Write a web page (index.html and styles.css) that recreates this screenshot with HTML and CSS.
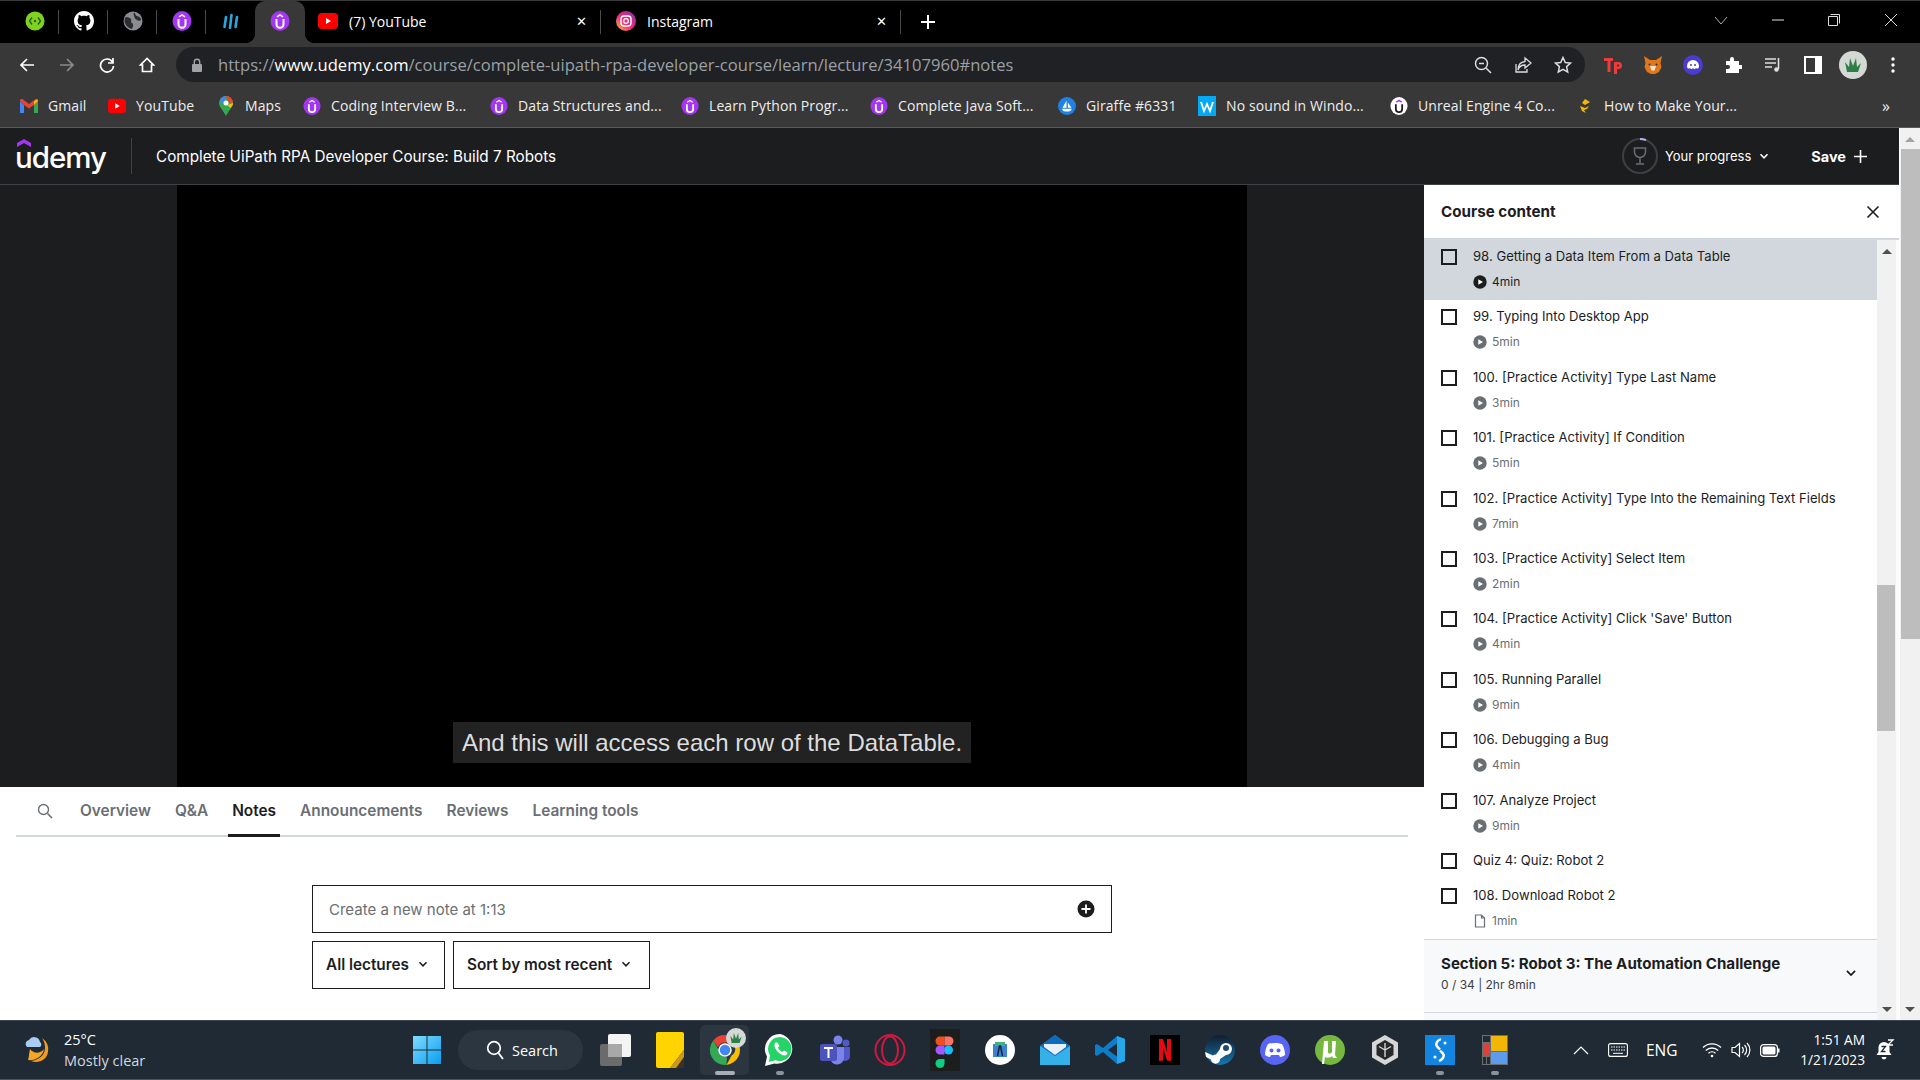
FILE: index.html
```html
<!DOCTYPE html>
<html lang="en">
<head>
    <meta charset="UTF-8">
    <title>Complete UiPath RPA Developer Course</title>
    <link rel="stylesheet" href="styles.css">
</head>
<body>
    <svg class="sprites" width="0" height="0">
        <symbol id="udemy" viewBox="0 0 20 20">
            <ellipse cx="10" cy="10" rx="9.5" ry="10" fill="#a435f0"/>
            <path d="M6.5 8v5.2a3.5 3.5 0 0 0 7 0V8" fill="none" stroke="#fff" stroke-width="2"/>
            <path d="M7 5.8 10 3.8l3 2" fill="none" stroke="#fff" stroke-width="1.4"/>
        </symbol>
        <symbol id="yt" viewBox="0 0 20 20">
            <rect x="0" y="2" width="20" height="16" rx="4" fill="#f00"/>
            <path d="M8 7v6l5-3z" fill="#fff"/>
        </symbol>
        <symbol id="play" viewBox="0 0 14 14">
            <circle cx="7" cy="7" r="6.7" fill="currentColor"/>
            <path d="M5.3 4.2v5.6L10 7z" fill="#fff"/>
        </symbol>
        <symbol id="doc" viewBox="0 0 14 14">
            <path d="M2.5 1h6l3 3v9h-9zM8.5 1v3h3" fill="none" stroke="currentColor" stroke-width="1.2"/>
        </symbol>
        <symbol id="chev" viewBox="0 0 12 12">
            <path d="M2.5 4.2 6 7.8l3.5-3.6" fill="none" stroke="currentColor" stroke-width="1.5"/>
        </symbol>
    </svg>

    <div class="tabstrip">
        <div class="pinned sep">
            <svg width="20" height="20" viewBox="0 0 20 20"><circle cx="10" cy="10" r="9.5" fill="#7ed321"/><path d="M7 6.5 4.5 10 7 13.5M13 6.5l2.5 3.5L13 13.5" fill="none" stroke="#2d5a0c" stroke-width="1.4"/><circle cx="10" cy="10" r="1.2" fill="#2d5a0c"/></svg>
        </div>
        <div class="pinned sep">
            <svg width="20" height="20" viewBox="0 0 16 16"><path fill="#fff" d="M8 0C3.58 0 0 3.58 0 8c0 3.54 2.29 6.53 5.47 7.59.4.07.55-.17.55-.38 0-.19-.01-.82-.01-1.49-2.01.37-2.53-.49-2.69-.94-.09-.23-.48-.94-.82-1.13-.28-.15-.68-.52-.01-.53.63-.01 1.08.58 1.23.82.72 1.21 1.87.87 2.33.66.07-.52.28-.87.51-1.07-1.78-.2-3.64-.89-3.64-3.95 0-.87.31-1.59.82-2.15-.08-.2-.36-1.02.08-2.12 0 0 .67-.21 2.2.82.64-.18 1.32-.27 2-.27s1.36.09 2 .27c1.53-1.04 2.2-.82 2.2-.82.44 1.1.16 1.92.08 2.12.51.56.82 1.27.82 2.15 0 3.07-1.87 3.75-3.65 3.95.29.25.54.73.54 1.48 0 1.07-.01 1.93-.01 2.2 0 .21.15.46.55.38A8.01 8.01 0 0 0 16 8c0-4.42-3.58-8-8-8z"/></svg>
        </div>
        <div class="pinned sep">
            <svg width="20" height="20" viewBox="0 0 20 20"><circle cx="10" cy="10" r="9.5" fill="#8a8d91"/><path d="M3 6c3 0 4 1 5 2s-1 3 1 4 1 4 0 6C5 17 2 14 1.5 10c0-2 .7-3 1.5-4zM11 1.5c2 1 1 3 3 3.5s3 1 4 3c0 2-2 2-3 1.5s-3-1-3.5-3-1.5-3-.5-5z" fill="#2c2d30"/></svg>
        </div>
        <div class="pinned sep"><svg width="20" height="20"><use href="#udemy"/></svg></div>
        <div class="pinned">
            <svg width="18" height="16" viewBox="0 0 18 16"><path d="M2.5 14 4 4M8 15 9.5 2M13.5 14 15 4" fill="none" stroke="#2aa7dc" stroke-width="2.6" stroke-linecap="round"/></svg>
        </div>
        <div class="pinned pinned-active"><svg width="20" height="20"><use href="#udemy"/></svg></div>
        <div class="tab tab-yt">
            <svg width="20" height="20"><use href="#yt"/></svg>
            <span class="tab-title">(7) YouTube</span>
            <span class="tab-close">✕</span>
        </div>
        <div class="tab tab-insta">
            <svg width="20" height="20" viewBox="0 0 20 20"><defs><linearGradient id="ig" x1="0" y1="1" x2="1" y2="0"><stop offset="0" stop-color="#fdc830"/><stop offset=".45" stop-color="#ee2a7b"/><stop offset="1" stop-color="#8134af"/></linearGradient></defs><circle cx="10" cy="10" r="10" fill="url(#ig)"/><rect x="5" y="5" width="10" height="10" rx="3" fill="none" stroke="#fff" stroke-width="1.4"/><circle cx="10" cy="10" r="2.3" fill="none" stroke="#fff" stroke-width="1.3"/></svg>
            <span class="tab-title">Instagram</span>
            <span class="tab-close">✕</span>
        </div>
        <svg class="new-tab" width="14" height="14" viewBox="0 0 14 14"><path d="M7 0v14M0 7h14" stroke="#fff" stroke-width="2"/></svg>
        <div class="window-controls">
            <svg width="14" height="14" viewBox="0 0 14 14"><path d="M1 4l6 7 6-7" fill="none" stroke="#aaa" stroke-width="1"/></svg>
            <svg width="14" height="14" viewBox="0 0 14 14"><path d="M1 7h12" stroke="#ddd" stroke-width="1"/></svg>
            <svg width="14" height="14" viewBox="0 0 14 14"><path d="M3.5 1.5h9v9M1.5 3.5h9v9h-9z" fill="none" stroke="#ddd" stroke-width="1"/></svg>
            <svg width="14" height="14" viewBox="0 0 14 14"><path d="M1 1l12 12M13 1 1 13" stroke="#ddd" stroke-width="1"/></svg>
        </div>
    </div>

    <div class="toolbar">
        <div class="tool"><svg width="16" height="16" viewBox="0 0 16 16"><path d="M15 8H2M8 2 2 8l6 6" fill="none" stroke="#fff" stroke-width="1.7"/></svg></div>
        <div class="tool"><svg width="16" height="16" viewBox="0 0 16 16"><path d="M1 8h13M8 2l6 6-6 6" fill="none" stroke="#8a8a8a" stroke-width="1.7"/></svg></div>
        <div class="tool"><svg width="16" height="16" viewBox="0 0 16 16"><path d="M13.5 5A6.5 6.5 0 1 0 14.5 9M14 1v5H9" fill="none" stroke="#fff" stroke-width="1.7"/></svg></div>
        <div class="tool"><svg width="16" height="16" viewBox="0 0 16 16"><path d="M8 1.5 1.5 8h2v6.5h9V8h2z" fill="none" stroke="#fff" stroke-width="1.7"/></svg></div>
        <div class="omnibox">
            <svg class="lock" width="12" height="14" viewBox="0 0 12 14"><rect x="1" y="6" width="10" height="8" rx="1" fill="#a0a2a5"/><path d="M3.3 6V4a2.7 2.7 0 0 1 5.4 0v2" fill="none" stroke="#a0a2a5" stroke-width="1.4"/></svg>
            <span class="url">https://<b>www.udemy.com</b>/course/complete-uipath-rpa-developer-course/learn/lecture/34107960#notes</span>
            <div class="omni-actions">
                <div class="tool"><svg width="18" height="18" viewBox="0 0 18 18"><circle cx="7.5" cy="7.5" r="6" fill="none" stroke="#ddd" stroke-width="1.5"/><path d="M5 7.5h5M12 12l5 5" stroke="#ddd" stroke-width="1.5"/></svg></div>
                <div class="tool"><svg width="18" height="18" viewBox="0 0 18 18"><path d="M2 8v8h11v-3M11 2l6 5-6 5V9C7 9 5 11 4 14c0-5 3-8 7-8.5z" fill="none" stroke="#ddd" stroke-width="1.3"/></svg></div>
                <div class="tool"><svg width="18" height="18" viewBox="0 0 18 18"><path d="m9 1.5 2.3 5 5.2.6-3.9 3.5 1.1 5.4L9 13.3 4.3 16l1.1-5.4-3.9-3.5 5.2-.6z" fill="none" stroke="#ddd" stroke-width="1.5"/></svg></div>
            </div>
        </div>
        <div class="extensions">
            <div class="tool"><svg width="20" height="20" viewBox="0 0 20 20"><path d="M1 3h9v3H7.5v11h-3V6H1z" fill="#ee3b3b"/><path d="M11 7h4.5a3.5 3.5 0 0 1 0 7H14v5h-3zM14 9.5v2h1.2a1 1 0 0 0 0-2z" fill="#ee3b3b"/></svg></div>
            <div class="tool"><svg width="20" height="20" viewBox="0 0 20 20"><path d="M1 1l6 4h6l6-4-1.5 7 1 4-2.5 5-4 2H8l-4-2-2.5-5 1-4z" fill="#e2761b"/><path d="M7 11h6l-1.5 4.5h-3z" fill="#f6e3c8"/><circle cx="6.5" cy="9.5" r="1" fill="#233447"/><circle cx="13.5" cy="9.5" r="1" fill="#233447"/></svg></div>
            <div class="tool"><svg width="20" height="20" viewBox="0 0 20 20"><circle cx="10" cy="10" r="10" fill="#4a3bd1"/><path d="M4 11a6 6 0 0 1 12 0c0 3-2 3-3 2-1 1.5-2 1.5-3 0-1 1.5-2 1.5-3 0-1 1-3 1-3-2z" fill="#fff"/><circle cx="8" cy="10" r="1" fill="#4a3bd1"/><circle cx="12" cy="10" r="1" fill="#4a3bd1"/></svg></div>
            <div class="tool"><svg width="18" height="18" viewBox="0 0 18 18"><path d="M2 5h4V3a2 2 0 0 1 4 0v2h5v4h2a2 2 0 0 1 0 4h-2v4H2v-4h2a2 2 0 0 0 0-4H2z" fill="#fff"/></svg></div>
            <div class="tool"><svg width="18" height="16" viewBox="0 0 18 16"><path d="M1 2h11M1 6h11M1 10h7" stroke="#ddd" stroke-width="1.6"/><path d="M14.5 1v11" stroke="#ddd" stroke-width="1.6"/><circle cx="12.5" cy="12.5" r="2.3" fill="#ddd"/></svg></div>
            <div class="tool"><svg width="18" height="18" viewBox="0 0 18 18"><rect x="1" y="1" width="16" height="16" fill="none" stroke="#fff" stroke-width="2"/><rect x="11" y="1" width="6" height="16" fill="#fff"/></svg></div>
            <div class="tool"><svg width="28" height="28" viewBox="0 0 28 28"><circle cx="14" cy="14" r="14" fill="#d5d9d6"/><path d="M8 21 6 11l4 5 1-9 3 8 3-8 1 9 4-4-3 9z" fill="#2e7d45"/></svg></div>
            <div class="tool"><svg width="4" height="16" viewBox="0 0 4 16"><circle cx="2" cy="2" r="1.7" fill="#fff"/><circle cx="2" cy="8" r="1.7" fill="#fff"/><circle cx="2" cy="14" r="1.7" fill="#fff"/></svg></div>
        </div>
    </div>

    <div class="bookmarks">
        <div class="bookmark"><svg width="18" height="14" viewBox="0 0 18 14"><path d="M0 2v12h4V6z" fill="#4285f4"/><path d="M18 2v12h-4V6z" fill="#34a853"/><path d="M0 2c0-2 2-2.5 3-1.5L9 5l6-4.5c1-1 3-.5 3 1.5l-4 4-5 3.5L4 6z" fill="#ea4335"/><path d="m14 6 4-4c0-1-.5-1.6-1-1.8L14 2.5z" fill="#fbbc04"/></svg><span>Gmail</span></div>
        <div class="bookmark"><svg width="18" height="18"><use href="#yt"/></svg><span>YouTube</span></div>
        <div class="bookmark"><svg width="18" height="20" viewBox="0 0 14 20"><path d="M7 0a7 7 0 0 1 7 7c0 4-4 7-7 13C4 14 0 11 0 7a7 7 0 0 1 7-7z" fill="#34a853"/><path d="M1 3.5A7 7 0 0 1 7 0v4.5L3 8z" fill="#4285f4"/><path d="M7 0a7 7 0 0 1 7 7l-5-1z" fill="#ea4335"/><path d="M14 7c0 2-1 3.5-2.5 5L8 9z" fill="#fbbc04"/><circle cx="7" cy="7" r="2.5" fill="#fff"/></svg><span>Maps</span></div>
        <div class="bookmark"><svg width="18" height="20"><use href="#udemy"/></svg><span>Coding Interview B...</span></div>
        <div class="bookmark"><svg width="18" height="20"><use href="#udemy"/></svg><span>Data Structures and...</span></div>
        <div class="bookmark"><svg width="18" height="20"><use href="#udemy"/></svg><span>Learn Python Progr...</span></div>
        <div class="bookmark"><svg width="18" height="20"><use href="#udemy"/></svg><span>Complete Java Soft...</span></div>
        <div class="bookmark"><svg width="18" height="20" viewBox="0 0 20 20"><circle cx="10" cy="10" r="10" fill="#2081e2"/><path d="M9.5 4v8H5zM11 6l4 6h-4zM4.5 13h11c-1 2.5-2.5 3-4 3H8c-1.5 0-3-.5-3.5-3z" fill="#fff"/></svg><span>Giraffe #6331</span></div>
        <div class="bookmark"><svg width="18" height="20" viewBox="0 0 18 20"><rect width="18" height="20" fill="#03a9f4"/><path d="m3 6 3 9 3-7 3 7 3-9" fill="none" stroke="#fff" stroke-width="1.8"/></svg><span>No sound in Windo...</span></div>
        <div class="bookmark"><svg width="18" height="20" viewBox="0 0 20 20"><ellipse cx="10" cy="10" rx="9.5" ry="10" fill="#fff"/><path d="M6.5 8v5.2a3.5 3.5 0 0 0 7 0V8" fill="none" stroke="#1c1d1f" stroke-width="2"/><path d="M7 5.8 10 3.8l3 2" fill="none" stroke="#a435f0" stroke-width="1.6"/></svg><span>Unreal Engine 4 Co...</span></div>
        <div class="bookmark"><svg width="18" height="16" viewBox="0 0 16 16"><path d="M8 1 13 4 8 7 5 5zM3 8l5 2 4-2-2 3-3 1 2 3-4-2z" fill="#f0b90b"/></svg><span>How to Make Your...</span></div>
        <div class="bookmark-more">»</div>
    </div>

    <div class="viewport">
        <div class="page">
            <header class="course-header">
                <div class="logo">
                    <svg class="logo-mark" width="16" height="8" viewBox="0 0 14 8"><path d="M7 0l7 4v4L7 4 0 8V4z" fill="#a435f0"/></svg>
                    <span class="logo-word">udemy</span>
                </div>
                <div class="course-title">Complete UiPath RPA Developer Course: Build 7 Robots</div>
                <div class="progress">
                    <svg width="36" height="36" viewBox="0 0 36 36"><circle cx="18" cy="18" r="17" fill="none" stroke="#3e4143" stroke-width="2"/><path d="M18 1a17 17 0 0 1 6 1.1" fill="none" stroke="#c0a8f0" stroke-width="2"/><path d="M12.5 10h11v4a5.5 5.5 0 0 1-11 0zM18 19.5V25M14 26h8" fill="none" stroke="#6a6f73" stroke-width="1.5"/></svg>
                    <span>Your progress</span>
                    <svg width="12" height="12"><use href="#chev"/></svg>
                </div>
                <div class="save">
                    <b>Save</b>
                    <svg width="13" height="13" viewBox="0 0 13 13"><path d="M6.5 0v13M0 6.5h13" stroke="#fff" stroke-width="1.6"/></svg>
                </div>
            </header>

            <div class="learn">
                <div class="learn-main">
                    <div class="stage">
                        <div class="video">
                            <div class="caption">And this will access each row of the DataTable.</div>
                        </div>
                    </div>
                    <nav class="lesson-tabs">
                        <svg class="lesson-search" width="16" height="16" viewBox="0 0 16 16"><circle cx="6.5" cy="6.5" r="5" fill="none" stroke="#6a6f73" stroke-width="1.4"/><path d="m10.5 10.5 4.5 4.5" stroke="#6a6f73" stroke-width="1.6"/></svg>
                        <a class="lesson-tab">Overview</a>
                        <a class="lesson-tab">Q&amp;A</a>
                        <a class="lesson-tab lesson-tab-on">Notes</a>
                        <a class="lesson-tab">Announcements</a>
                        <a class="lesson-tab">Reviews</a>
                        <a class="lesson-tab">Learning tools</a>
                    </nav>
                    <section class="notes">
                        <div class="note-input">
                            <span>Create a new note at 1:13</span>
                            <svg width="18" height="18" viewBox="0 0 18 18"><circle cx="9" cy="9" r="8.5" fill="#1c1d1f"/><path d="M9 4.5v9M4.5 9h9" stroke="#fff" stroke-width="1.8"/></svg>
                        </div>
                        <div class="note-filters">
                            <div class="filter filter-lectures">All lectures <svg width="12" height="12"><use href="#chev"/></svg></div>
                            <div class="filter filter-sort">Sort by most recent <svg width="12" height="12"><use href="#chev"/></svg></div>
                        </div>
                    </section>
                </div>

                <aside class="sidebar">
                    <div class="sidebar-head">
                        <b>Course content</b>
                        <svg width="14" height="14" viewBox="0 0 14 14"><path d="M1.5 1.5l11 11M12.5 1.5l-11 11" stroke="#1c1d1f" stroke-width="1.6"/></svg>
                    </div>
                    <div class="sidebar-body">
                        <div class="lectures">
                            <div class="lecture lecture-on">
                                <i class="check"></i>
                                <div><div class="lecture-title">98. Getting a Data Item From a Data Table</div><div class="lecture-time"><svg width="14" height="14"><use href="#play"/></svg>4min</div></div>
                            </div>
                            <div class="lecture">
                                <i class="check"></i>
                                <div><div class="lecture-title">99. Typing Into Desktop App</div><div class="lecture-time"><svg width="14" height="14"><use href="#play"/></svg>5min</div></div>
                            </div>
                            <div class="lecture">
                                <i class="check"></i>
                                <div><div class="lecture-title">100. [Practice Activity] Type Last Name</div><div class="lecture-time"><svg width="14" height="14"><use href="#play"/></svg>3min</div></div>
                            </div>
                            <div class="lecture">
                                <i class="check"></i>
                                <div><div class="lecture-title">101. [Practice Activity] If Condition</div><div class="lecture-time"><svg width="14" height="14"><use href="#play"/></svg>5min</div></div>
                            </div>
                            <div class="lecture">
                                <i class="check"></i>
                                <div><div class="lecture-title">102. [Practice Activity] Type Into the Remaining Text Fields</div><div class="lecture-time"><svg width="14" height="14"><use href="#play"/></svg>7min</div></div>
                            </div>
                            <div class="lecture">
                                <i class="check"></i>
                                <div><div class="lecture-title">103. [Practice Activity] Select Item</div><div class="lecture-time"><svg width="14" height="14"><use href="#play"/></svg>2min</div></div>
                            </div>
                            <div class="lecture">
                                <i class="check"></i>
                                <div><div class="lecture-title">104. [Practice Activity] Click 'Save' Button</div><div class="lecture-time"><svg width="14" height="14"><use href="#play"/></svg>4min</div></div>
                            </div>
                            <div class="lecture">
                                <i class="check"></i>
                                <div><div class="lecture-title">105. Running Parallel</div><div class="lecture-time"><svg width="14" height="14"><use href="#play"/></svg>9min</div></div>
                            </div>
                            <div class="lecture">
                                <i class="check"></i>
                                <div><div class="lecture-title">106. Debugging a Bug</div><div class="lecture-time"><svg width="14" height="14"><use href="#play"/></svg>4min</div></div>
                            </div>
                            <div class="lecture">
                                <i class="check"></i>
                                <div><div class="lecture-title">107. Analyze Project</div><div class="lecture-time"><svg width="14" height="14"><use href="#play"/></svg>9min</div></div>
                            </div>
                            <div class="lecture lecture-quiz">
                                <i class="check"></i>
                                <div><div class="lecture-title">Quiz 4: Quiz: Robot 2</div></div>
                            </div>
                            <div class="lecture lecture-last">
                                <i class="check"></i>
                                <div><div class="lecture-title">108. Download Robot 2</div><div class="lecture-time"><svg width="14" height="14"><use href="#doc"/></svg>1min</div></div>
                            </div>
                            <div class="section-row">
                                <div>
                                    <div class="section-name">Section 5: Robot 3: The Automation Challenge</div>
                                    <div class="section-meta">0 / 34 | 2hr 8min</div>
                                </div>
                                <svg width="14" height="14"><use href="#chev"/></svg>
                            </div>
                        </div>
                        <div class="scrollbar scrollbar-inner">
                            <i class="arrow-up"></i>
                            <div class="scroll-track"><div class="scroll-thumb"></div></div>
                            <i class="arrow-down"></i>
                        </div>
                    </div>
                </aside>
            </div>
        </div>
        <div class="scrollbar scrollbar-page">
            <i class="arrow-up arrow-dim"></i>
            <div class="scroll-track"><div class="scroll-thumb"></div></div>
            <i class="arrow-down"></i>
        </div>
    </div>

    <footer class="taskbar">
        <div class="weather">
            <svg width="30" height="32" viewBox="0 0 30 32"><path d="M18 4a14 14 0 0 1 6 14c-1 8-10 12-17 9 8-1 14-6 14-13 0-4-1-7-3-10z" fill="#f39a1f"/><path d="M6 15c4 5 10 5 14 0-1 7-8 12-16 11 1-3 1-7 2-11z" fill="#f5a623"/><path d="M3 13a4 4 0 0 1 2-7 6 6 0 0 1 11 2 3 3 0 0 1 0 5z" fill="#a9cdf2"/></svg>
            <div class="weather-text"><div>25°C</div><div class="weather-sub">Mostly clear</div></div>
        </div>
        <div class="dock">
            <div class="dock-item">
                <svg width="30" height="30" viewBox="0 0 30 30"><defs><linearGradient id="win" x1="0" y1="0" x2="1" y2="1"><stop offset="0" stop-color="#7fdcff"/><stop offset="1" stop-color="#0a9df0"/></linearGradient></defs><path d="M1 1h13.5v13.5H1zM15.5 1H29v13.5H15.5zM1 15.5h13.5V29H1zM15.5 15.5H29V29H15.5z" fill="url(#win)"/></svg>
            </div>
            <div class="dock-search">
                <svg width="18" height="20" viewBox="0 0 18 20"><circle cx="8" cy="8" r="6.3" fill="none" stroke="#fff" stroke-width="1.7"/><path d="m12.5 13 4.5 6" stroke="#fff" stroke-width="1.8"/></svg>
                <span>Search</span>
            </div>
            <div class="dock-item">
                <svg width="32" height="32" viewBox="0 0 32 32"><rect x="1" y="10" width="22" height="22" rx="2" fill="#6b6b6b"/><rect x="9" y="0" width="23" height="23" rx="2" fill="#f4f4f4"/><rect x="9" y="10" width="14" height="13" fill="#a8a8a8"/></svg>
            </div>
            <div class="dock-item">
                <svg width="28" height="36" viewBox="0 0 28 36"><rect width="28" height="36" rx="2" fill="#ffd400"/><path d="M28 18v18H14z" fill="#3a3226"/><path d="M28 18 14 36h6l8-11z" fill="#c99a1e"/></svg>
            </div>
            <div class="dock-item dock-open">
                <svg width="32" height="32" viewBox="0 0 32 32"><path d="M16 1a15 15 0 0 1 13 7.5H16a7.5 7.5 0 0 0-7 4.8L4.3 6.4A15 15 0 0 1 16 1z" fill="#ea4335"/><path d="M29 8.5a15 15 0 0 1-11.5 22.4l5-9.4a7.5 7.5 0 0 0 0-13z" fill="#fbbc04"/><path d="M4.3 6.4 10 16.5a7.5 7.5 0 0 0 8 6.8l-.5 7.6A15 15 0 0 1 4.3 6.4z" fill="#34a853"/><circle cx="16" cy="16" r="6" fill="#4285f4" stroke="#fff" stroke-width="1.5"/></svg>
                <svg class="dock-badge" width="20" height="20" viewBox="0 0 28 28"><circle cx="14" cy="14" r="14" fill="#d5d9d6"/><path d="M8 21 6 11l4 5 1-9 3 8 3-8 1 9 4-4-3 9z" fill="#2e7d45"/></svg>
            </div>
            <div class="dock-item dock-dot">
                <svg width="32" height="34" viewBox="0 0 32 34"><path d="M16 1a15 15 0 0 0-13 22.5L1 33l9.5-2.5A15 15 0 1 0 16 1z" fill="#fff"/><path d="M16 4a12 12 0 0 0-10 18.5L5 29l6.5-1.7A12 12 0 1 0 16 4z" fill="#25d366"/><path d="M11.5 9.5c-2 2-1 6 2.5 9.5s7 4.5 9 2.5l.5-2-3.5-2-1.5 1.5c-2-.5-4-2.5-4.5-4.5l1.5-1.5-2-3.5z" fill="#fff"/></svg>
            </div>
            <div class="dock-item">
                <svg width="32" height="32" viewBox="0 0 32 32"><circle cx="19" cy="6" r="4.5" fill="#7b83eb"/><circle cx="27" cy="9" r="3.5" fill="#5059c9"/><path d="M22 13h9v9a5 5 0 0 1-9 3z" fill="#5059c9"/><path d="M12 13h13v11a7 7 0 0 1-13 3z" fill="#7b83eb"/><rect x="1" y="10" width="17" height="17" rx="2" fill="#4b53bc"/><path d="M5 14h9M9.5 14v10" stroke="#fff" stroke-width="2"/></svg>
            </div>
            <div class="dock-item">
                <svg width="32" height="32" viewBox="0 0 32 32"><ellipse cx="16" cy="16" rx="14.5" ry="15" fill="none" stroke="#d3173f" stroke-width="2"/><ellipse cx="16" cy="16" rx="8" ry="13.5" fill="none" stroke="#d3173f" stroke-width="2"/></svg>
            </div>
            <div class="dock-item">
                <svg width="30" height="42" viewBox="0 0 30 42"><rect width="30" height="42" fill="#1c1e1e"/><circle cx="18.5" cy="21" r="4.5" fill="#1abcfe"/><path d="M10 30h4.5v4.5a4.5 4.5 0 1 1-4.5-4.5z" fill="#0acf83"/><path d="M10 16.5h4.5v9H10a4.5 4.5 0 0 1 0-9z" fill="#a259ff"/><path d="M10 7.5h4.5v9H10a4.5 4.5 0 0 1 0-9z" fill="#f24e1e"/><path d="M14.5 7.5H19a4.5 4.5 0 0 1 0 9h-4.5z" fill="#ff7262"/></svg>
            </div>
            <div class="dock-item">
                <svg width="30" height="30" viewBox="0 0 30 30"><circle cx="15" cy="15" r="15" fill="#fff"/><path d="M8 9h14v13H8z" fill="#3b82d6"/><path d="M10 7h10v4H10z" fill="#3fb27f"/><path d="M12.5 21l2-10h1l2 10" fill="none" stroke="#16243a" stroke-width="1.5"/></svg>
            </div>
            <div class="dock-item">
                <svg width="32" height="30" viewBox="0 0 32 30"><path d="M1 11 16 0l15 11v19H1z" fill="#1e9be0"/><path d="M1 11 16 0l15 11-15 11z" fill="#0f6cbd"/><path d="M5 9h22v3l-11 8-11-8z" fill="#e8f1fa"/><path d="M1 11l15 10 15-10v19H1z" fill="#35b1ea"/></svg>
            </div>
            <div class="dock-item">
                <svg width="30" height="30" viewBox="0 0 30 30"><path d="M22 1 30 4v22l-8 3-14-12-6 4-2-1V10l2-1 6 4z" fill="#0e7dc9"/><path d="M22 1 30 4v22l-8 3V1z" fill="#25a5ea"/><path d="M22 8.5 13 15l9 6.5z" fill="#1f2a35"/></svg>
            </div>
            <div class="dock-item">
                <svg width="30" height="30" viewBox="0 0 30 30"><rect width="30" height="30" fill="#000"/><path d="M9 4h4l4 13V4h4v22l-4-.5-4-13V25.5l-4 .5z" fill="#e50914"/></svg>
            </div>
            <div class="dock-item">
                <svg width="30" height="30" viewBox="0 0 30 30"><defs><linearGradient id="steam" x1="0" y1="0" x2="0" y2="1"><stop offset="0" stop-color="#111d2e"/><stop offset="1" stop-color="#1578b0"/></linearGradient></defs><circle cx="15" cy="15" r="15" fill="url(#steam)"/><path d="M0 17l8 3.5a5 5 0 0 1 3-1l4-5.5a6 6 0 1 1 6 6l-6 4a4.5 4.5 0 0 1-9 .5L1 22z" fill="#fff"/><circle cx="21" cy="13" r="3" fill="#1a4a70"/></svg>
            </div>
            <div class="dock-item">
                <svg width="30" height="30" viewBox="0 0 30 30"><circle cx="15" cy="15" r="15" fill="#5865f2"/><path d="M8 9c4-1.5 10-1.5 14 0 2 3 3 7 3 11-2 1.5-4 2-5 2l-1-2H11l-1 2c-1 0-3-.5-5-2 0-4 1-8 3-11z" fill="#fff"/><circle cx="11.5" cy="15.5" r="2" fill="#5865f2"/><circle cx="18.5" cy="15.5" r="2" fill="#5865f2"/></svg>
            </div>
            <div class="dock-item">
                <svg width="30" height="30" viewBox="0 0 30 30"><circle cx="15" cy="15" r="15" fill="#76b83f"/><path d="M9 6h4v11c0 2 3 2 4 0V6h4l-1 14 2 3h-4l-1-2c-2 2-5 2-7 1l-1 7H7z" fill="#fff"/></svg>
            </div>
            <div class="dock-item">
                <svg width="28" height="30" viewBox="0 0 28 30"><path d="M14 0l13 7.5v15L14 30 1 22.5v-15z" fill="#d6d6d6"/><path d="M14 5l8.5 5v10L14 25l-8.5-5V10z" fill="#26282a"/><path d="M14 8v14M8 11.5l6 3.5 6-3.5" fill="none" stroke="#d6d6d6" stroke-width="1.4"/></svg>
            </div>
            <div class="dock-item dock-dot">
                <svg width="30" height="30" viewBox="0 0 30 30"><rect width="30" height="30" fill="#1185e0"/><path d="M16 4c-5 2-6 6-3 8.5l2 2M14 26c5-2 6-6 3-8.5l-2-2" fill="none" stroke="#fff" stroke-width="2.4"/><circle cx="20" cy="8" r="1.5" fill="#fff"/><circle cx="10" cy="22" r="1.5" fill="#fff"/></svg>
            </div>
            <div class="dock-item dock-dot">
                <svg width="26" height="30" viewBox="0 0 26 30"><rect width="26" height="30" fill="#6a6f73"/><rect x="9" y="1" width="16" height="15" fill="#f2b705"/><rect x="9" y="17" width="16" height="12" fill="#5d9cec"/><rect x="1" y="8" width="7" height="13" fill="#d9413a"/><rect x="1" y="1" width="7" height="6" fill="#222c36"/><rect x="1" y="22" width="3" height="7" fill="#222c36"/><rect x="5" y="22" width="3" height="7" fill="#222c36"/></svg>
            </div>
        </div>
        <div class="tray">
            <svg class="tray-chevron" width="16" height="10" viewBox="0 0 16 10"><path d="M1 9l7-7 7 7" fill="none" stroke="#fff" stroke-width="1.2"/></svg>
            <svg class="tray-keyboard" width="20" height="14" viewBox="0 0 20 14"><rect x=".6" y=".6" width="18.8" height="12.8" rx="2" fill="none" stroke="#fff" stroke-width="1.1"/><path d="M3 4h14M3 7h14" stroke="#fff" stroke-width="1" stroke-dasharray="1.5 1"/><path d="M5 10.3h10" stroke="#fff" stroke-width="1"/></svg>
            <span class="tray-lang">ENG</span>
            <svg class="tray-wifi" width="20" height="16" viewBox="0 0 20 16"><path d="M1 5.5a13 13 0 0 1 18 0M3.8 8.5a9 9 0 0 1 12.4 0M6.5 11.3a5 5 0 0 1 7 0" fill="none" stroke="#fff" stroke-width="1.3"/><circle cx="10" cy="14" r="1.3" fill="#fff"/></svg>
            <svg class="tray-volume" width="20" height="16" viewBox="0 0 20 16"><path d="M1 5.5h3L8.5 1.5v13L4 10.5H1zM11 5a4 4 0 0 1 0 6M13.5 3a7 7 0 0 1 0 10M16 1a10 10 0 0 1 0 14" fill="none" stroke="#fff" stroke-width="1.2"/></svg>
            <svg class="tray-battery" width="20" height="13" viewBox="0 0 20 13"><rect x=".6" y=".6" width="16.8" height="11.8" rx="3" fill="none" stroke="#fff" stroke-width="1.2"/><rect x="2.5" y="2.5" width="13" height="8" rx="1.5" fill="#fff"/><path d="M18.7 4.5v4" stroke="#fff" stroke-width="1.6"/></svg>
            <div class="clock"><div>1:51 AM</div><div>1/21/2023</div></div>
            <svg class="tray-bell" width="20" height="22" viewBox="0 0 20 22"><path d="M9 3a5.5 5.5 0 0 0-5.5 5.5V13L1.5 16h15l-2-3V8.5A5.5 5.5 0 0 0 9 3zM6.500 18a2.500 2.500 0 0 0 5 0z" fill="#fff"/><path d="M6.5 7.5h4l-4 5h4" fill="none" stroke="#1f2a35" stroke-width="1.3"/><path d="M13 1h5l-5 5h5" fill="none" stroke="#fff" stroke-width="1.3"/></svg>
        </div>
    </footer>
</body>
</html>
```

FILE: styles.css
```css
* {
    box-sizing: border-box;
}
body {
    margin: 0;
    width: 1920px;
    height: 1080px;
    overflow: hidden;
    display: flex;
    flex-direction: column;
    font-family: Inter, "Liberation Sans", sans-serif;
    color: #1c1d1f;
    background: white;
}
svg {
    display: block;
    flex: none;
}
.sprites {
    position: absolute;
}

/* Browser tabs */
.tabstrip {
    height: 43px;
    flex: none;
    display: flex;
    align-items: center;
    padding-left: 10px;
    background: #000;
    border-top: 1px solid #3a3a3a;
    font-family: "Open Sans", sans-serif;
    font-size: 14px;
    color: #fff;
}
.pinned {
    width: 49px;
    height: 42px;
    padding-bottom: 2px;
    display: flex;
    align-items: center;
    justify-content: center;
    position: relative;
}
.pinned.sep::after {
    content: "";
    position: absolute;
    right: 0;
    top: 9px;
    height: 24px;
    width: 1px;
    background: #4a4a4a;
}
.pinned-active {
    width: 50px;
    background: #383838;
    border-radius: 10px 10px 0 0;
}
.pinned-active::before,
.pinned-active::after {
    content: "";
    position: absolute;
    bottom: 0;
    width: 10px;
    height: 10px;
}
.pinned-active::before {
    left: -10px;
    background: radial-gradient(circle at 0 0, transparent 10px, #383838 10.5px);
}
.pinned-active::after {
    right: -10px;
    background: radial-gradient(circle at 100% 0, transparent 10px, #383838 10.5px);
}
.tab {
    height: 42px;
    padding-bottom: 2px;
    display: flex;
    align-items: center;
    position: relative;
}
.tab::after {
    content: "";
    position: absolute;
    right: 0;
    top: 9px;
    height: 24px;
    width: 1px;
    background: #4a4a4a;
}
.tab-yt {
    width: 296px;
    padding-left: 13px;
    padding-right: 14px;
}
.tab-insta {
    width: 300px;
    padding-left: 15px;
    padding-right: 14px;
}
.tab-title {
    margin-left: 11px;
    flex: 1;
}
.tab-close {
    font-size: 13px;
}
.new-tab {
    margin-left: 20px;
}
.window-controls {
    margin-left: auto;
    width: 206px;
    display: flex;
    justify-content: space-between;
    padding-right: 22px;
    margin-top: -4px;
}

/* Address bar */
.toolbar {
    height: 43px;
    flex: none;
    display: flex;
    align-items: center;
    padding-left: 7px;
    background: #383838;
}
.tool {
    width: 40px;
    height: 36px;
    display: flex;
    align-items: center;
    justify-content: center;
    flex: none;
}
.omnibox {
    width: 1409px;
    height: 35px;
    margin-left: 9px;
    display: flex;
    align-items: center;
    padding: 0 2px 0 15px;
    background: #202124;
    border-radius: 18px;
}
.url {
    margin-left: 15px;
    font-family: "Open Sans", sans-serif;
    font-size: 16.6px;
    color: #9aa0a6;
    white-space: nowrap;
}
.url b {
    font-weight: 400;
    color: #fff;
}
.omni-actions {
    margin-left: auto;
    display: flex;
}
.extensions {
    display: flex;
    margin-left: 8px;
}

/* Bookmarks */
.bookmarks {
    height: 42px;
    flex: none;
    display: grid;
    grid-template-columns: 88px 109px 86px 187px 191px 189px 188px 140px 192px 186px 1fr 38px;
    align-items: center;
    padding: 0 0 2px 20px;
    background: #383838;
    border-bottom: 1px solid #5a5a5a;
    font-family: "Open Sans", sans-serif;
    font-size: 14px;
    letter-spacing: 0.1px;
    color: #eee;
}
.bookmark {
    display: flex;
    align-items: center;
    gap: 10px;
    white-space: nowrap;
}
.bookmark-more {
    grid-column: 12;
    font-size: 16px;
}

/* Page */
.viewport {
    flex: 1;
    min-height: 0;
    display: flex;
}
.page {
    flex: 1;
    min-width: 0;
    display: flex;
    flex-direction: column;
}
.course-header {
    height: 57px;
    flex: none;
    display: flex;
    align-items: center;
    padding-left: 16px;
    background: #1c1d1f;
    border-bottom: 1px solid #3e4143;
    color: #fff;
}
.logo {
    width: 116px;
    height: 36px;
    position: relative;
    border-right: 1px solid #3e4143;
}
.logo-mark {
    position: absolute;
    left: 0;
    top: 1px;
}
.logo-word {
    position: absolute;
    left: -1px;
    top: 3px;
    font-size: 29.5px;
    font-weight: 500;
    letter-spacing: -1px;
    line-height: 32px;
}
.course-title {
    margin-left: 24px;
    font-size: 15.25px;
    flex: 1;
}
.progress {
    display: flex;
    align-items: center;
    gap: 7px;
    font-size: 13px;
}
.save {
    display: flex;
    align-items: center;
    gap: 8px;
    margin-left: 41px;
    margin-right: 32px;
    font-size: 14.5px;
}
.learn {
    flex: 1;
    min-height: 0;
    display: flex;
}
.learn-main {
    flex: 1;
    min-width: 0;
}
.stage {
    height: 602px;
    display: flex;
    justify-content: center;
    background: #1c1d1f;
}
.video {
    width: 1070px;
    background: #000;
    display: flex;
    justify-content: center;
    align-items: flex-end;
}
.caption {
    margin-bottom: 24px;
    padding: 7px 9px 0;
    height: 41px;
    background: rgba(40, 40, 40, 0.85);
    color: #ddd;
    font-family: "Liberation Sans", Arial, sans-serif;
    font-size: 24px;
}
.lesson-tabs {
    height: 50px;
    margin: 0 16px;
    display: flex;
    align-items: stretch;
    gap: 16px;
    border-bottom: 2px solid #d1d7dc;
    padding-left: 21px;
}
.lesson-search {
    align-self: center;
    margin-right: 7px;
}
.lesson-tab {
    display: flex;
    align-items: center;
    padding: 0 4px;
    font-size: 15.4px;
    font-weight: 600;
    color: #6a6f73;
    margin-bottom: -2px;
    border-bottom: 3px solid transparent;
}
.lesson-tab-on {
    color: #1c1d1f;
    border-bottom-color: #1c1d1f;
}
.notes {
    width: 800px;
    margin: 48px 0 0 312px;
}
.note-input {
    height: 48px;
    display: flex;
    align-items: center;
    justify-content: space-between;
    padding: 0 16px;
    border: 1px solid #1c1d1f;
    font-size: 15px;
    color: #6a6f73;
}
.note-filters {
    display: flex;
    gap: 8px;
    margin-top: 8px;
}
.filter {
    height: 48px;
    padding-bottom: 2px;
    display: flex;
    align-items: center;
    gap: 8px;
    padding-left: 13px;
    border: 1px solid #1c1d1f;
    font-size: 15.3px;
    font-weight: 600;
    white-space: nowrap;
}
.filter-lectures {
    width: 133px;
}
.filter-sort {
    width: 197px;
}

/* Course content */
.sidebar {
    width: 475px;
    flex: none;
    display: flex;
    flex-direction: column;
    min-height: 0;
}
.sidebar-head {
    height: 55px;
    flex: none;
    display: flex;
    align-items: center;
    justify-content: space-between;
    padding: 0 19px 0 17px;
    border-bottom: 2px solid #d1d7dc;
    font-size: 15.2px;
}
.sidebar-body {
    flex: 1;
    min-height: 0;
    display: flex;
}
.lectures {
    flex: 1;
    min-width: 0;
    overflow: hidden;
    background: #f7f9fa;
}
.lecture {
    height: 60.4px;
    display: flex;
    padding: 8px 17px;
    gap: 16px;
    background: white;
}
.lecture-on {
    background: #d1d7dc;
}
.lecture-quiz {
    height: 35px;
}
.lecture-last {
    height: 61px;
    border-bottom: 1px solid #d1d7dc;
}
.check {
    width: 16px;
    height: 16px;
    margin-top: 1px;
    flex: none;
    border: 2px solid #1c1d1f;
}
.lecture-title {
    font-size: 13.1px;
    line-height: 16px;
}
.lecture-time {
    display: flex;
    align-items: center;
    gap: 5px;
    margin-top: 10px;
    font-size: 12px;
    line-height: 16px;
    color: #6a6f73;
}
.lecture-on .lecture-time {
    color: #1c1d1f;
}
.section-row {
    height: 73px;
    display: flex;
    justify-content: space-between;
    align-items: center;
    padding: 0 19px 5px 17px;
    border-bottom: 1px solid #d1d7dc;
}
.section-name {
    font-size: 15.1px;
    font-weight: 700;
}
.section-meta {
    margin-top: 4px;
    font-size: 12px;
    color: #3e4143;
}

/* Scrollbars */
.scrollbar {
    display: flex;
    flex-direction: column;
    align-items: center;
    background: #f1f1f1;
}
.scrollbar-inner {
    width: 22px;
    border-right: 3px solid #fbfbfb;
}
.scrollbar-page {
    width: 20px;
    margin-left: 1px;
}
.scroll-track {
    flex: 1;
    width: 100%;
    min-height: 0;
}
.scrollbar-inner .scroll-track {
    padding-top: 325px;
}
.scrollbar-inner .scroll-thumb {
    height: 146px;
    margin-right: 1px;
    background: #bdbdbd;
}
.scrollbar-page .scroll-track {
    padding-top: 1px;
}
.scrollbar-page .scroll-thumb {
    height: 490px;
    margin-left: 1px;
    background: #bdbdbd;
}
.arrow-up,
.arrow-down {
    flex: none;
    width: 0;
    height: 0;
    border-left: 5px solid transparent;
    border-right: 5px solid transparent;
}
.arrow-up {
    margin: 9px 0 6px;
    border-bottom: 5px solid #505050;
}
.arrow-down {
    margin: 6px 0 8px;
    border-top: 5px solid #505050;
}
.arrow-dim {
    border-bottom-color: #a3a3a3;
}

/* Windows taskbar */
.taskbar {
    height: 60px;
    flex: none;
    display: flex;
    align-items: center;
    background: #1f2a35;
    border-top: 1px solid #3a444e;
    border-bottom: 1px solid #4a545e;
    color: #fff;
    font-family: "Open Sans", sans-serif;
    font-size: 14.5px;
}
.weather {
    width: 399px;
    display: flex;
    align-items: center;
    gap: 10px;
    padding-left: 24px;
}
.weather-text {
    line-height: 21px;
}
.weather-sub {
    color: #d4d8dc;
}
.dock {
    display: flex;
    align-items: center;
    height: 100%;
}
.dock-item {
    width: 55px;
    height: 100%;
    display: flex;
    align-items: center;
    justify-content: center;
    position: relative;
}
.dock-search {
    width: 125px;
    height: 40px;
    margin: 0 4px;
    display: flex;
    align-items: center;
    gap: 8px;
    padding-left: 28px;
    background: #2b3641;
    border-radius: 20px;
}
.dock-open::before {
    content: "";
    position: absolute;
    left: 3px;
    right: 3px;
    top: 4px;
    bottom: 4px;
    background: #2b3641;
    border-radius: 5px;
}
.dock-open svg {
    position: relative;
}
.dock-open::after,
.dock-dot::after {
    content: "";
    position: absolute;
    bottom: 4px;
    left: 50%;
    width: 8px;
    height: 4px;
    margin-left: -4px;
    background: #8b949c;
    border-radius: 2px;
}
.dock-open::after {
    width: 20px;
    margin-left: -10px;
    background: #a7aeb5;
}
.dock .dock-badge {
    position: absolute;
    right: 6px;
    top: 7px;
}
.tray {
    margin-left: auto;
    display: flex;
    align-items: center;
    padding-right: 25px;
}
.tray-keyboard {
    margin-left: 19px;
}
.tray-lang {
    margin-left: 18px;
    width: 44px;
    font-size: 15.5px;
}
.tray-wifi {
    margin-left: 12px;
}
.tray-volume {
    margin-left: 9px;
}
.tray-battery {
    margin-left: 9px;
}
.clock {
    margin-left: 7px;
    text-align: right;
    line-height: 20px;
    width: 78px;
    font-size: 13.7px;
}
.tray-bell {
    margin-left: 10px;
}
```
